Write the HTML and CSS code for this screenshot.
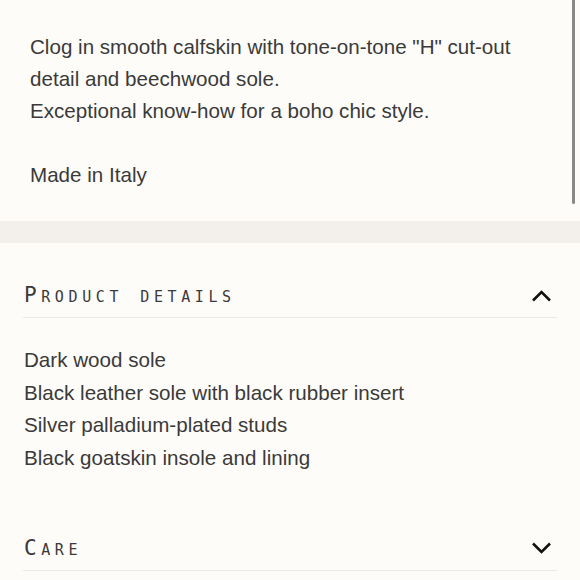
FILE: index.html
```html
<!DOCTYPE html>
<html>
<head>
<meta charset="utf-8">
<link rel="stylesheet" href="styles.css">
</head>
<body>
<div class="scrollbar"></div>
<section class="desc">
  <p>Clog in smooth calfskin with tone-on-tone "H" cut-out detail and beechwood sole.<br>Exceptional know-how for a boho chic style.</p>
  <p class="made">Made in Italy</p>
</section>
<div class="band"></div>
<section class="accordion">
  <div class="acc-item open">
    <div class="acc-head">
      <h2>Product details</h2>
      <svg class="chev" width="21" height="13" viewBox="0 0 21 13"><path d="M2 11.5 L10.5 3 L19 11.5" fill="none" stroke="#111" stroke-width="2.6"/></svg>
    </div>
    <ul class="acc-body">
      <li>Dark wood sole</li>
      <li>Black leather sole with black rubber insert</li>
      <li>Silver palladium-plated studs</li>
      <li>Black goatskin insole and lining</li>
    </ul>
  </div>
  <div class="acc-item">
    <div class="acc-head">
      <h2>Care</h2>
      <svg class="chev" width="21" height="13" viewBox="0 0 21 13"><path d="M2 1.5 L10.5 10 L19 1.5" fill="none" stroke="#111" stroke-width="2.6"/></svg>
    </div>
  </div>
</section>
</body>
</html>
```
FILE: styles.css
```css
html, body {
  margin: 0;
  padding: 0;
  background: #fefcf8;
  overflow: hidden;
}
body {
  font-family: "Liberation Sans", Arial, sans-serif;
  color: #3a3a3a;
  height: 580px;
}
.scrollbar {
  position: absolute;
  top: 0;
  left: 572px;
  width: 3px;
  height: 204px;
  background: #8b8985;
  border-radius: 0 0 2px 2px;
}
.desc {
  padding: 31px 30px 30px 30px;
}
.desc p {
  margin: 0;
  font-size: 20.6px;
  line-height: 32px;
  width: 500px;
}
.desc .made {
  margin-top: 32px;
}
.band {
  height: 22px;
  background: #f3f0eb;
}
.accordion {
  padding: 0 23px;
}
.acc-item {
  padding-top: 30px;
}
.acc-item.open + .acc-item {
  padding-top: 52px;
}
.acc-head {
  height: 44px;
  display: flex;
  align-items: center;
  justify-content: space-between;
  border-bottom: 1px solid #ece9e4;
  padding: 0 5px 0 1px;
}
.acc-head h2 {
  margin: 0;
  font-family: "DejaVu Sans Mono", monospace;
  font-weight: normal;
  font-size: 21px;
  font-variant: small-caps;
  letter-spacing: 4.6px;
  color: #3a3a3a;
}
.chev {
  display: block;
}
.acc-body {
  list-style: none;
  margin: 0;
  padding: 26px 0 0 1px;
}
.acc-body li {
  font-size: 20.6px;
  line-height: 32.5px;
}
```
